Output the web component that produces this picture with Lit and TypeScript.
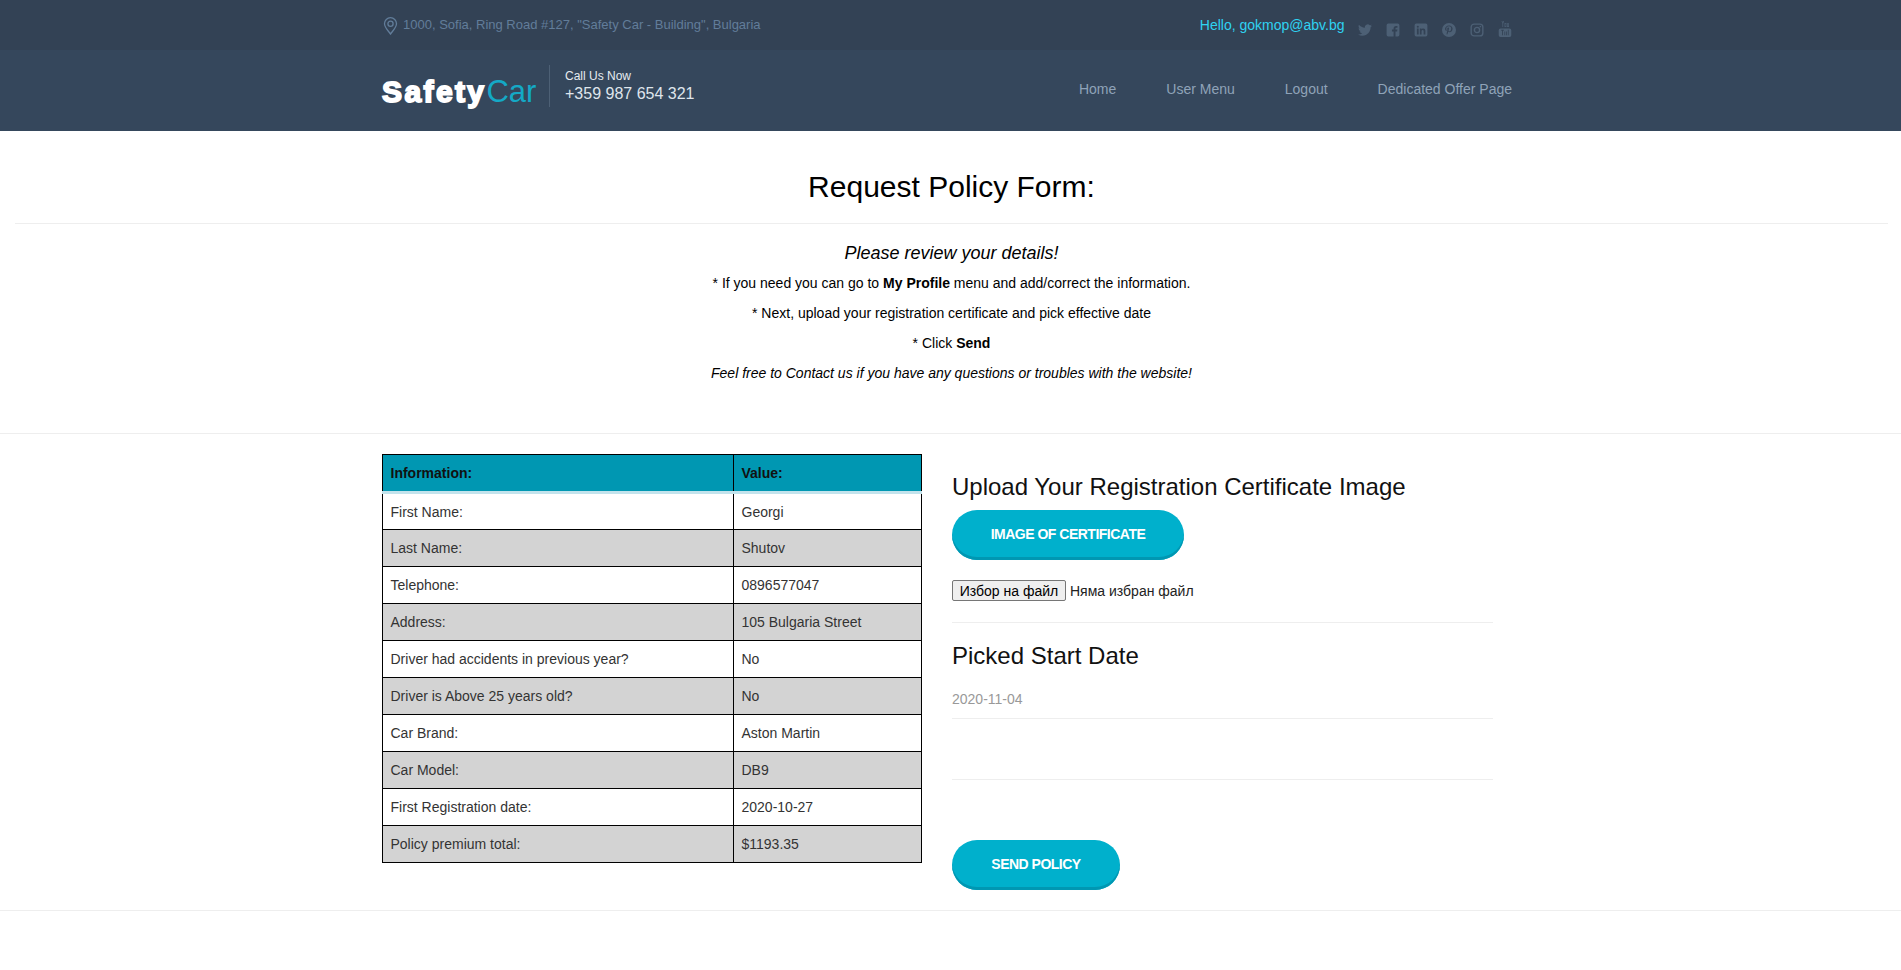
import { LitElement, html, css, svg } from 'lit';
import { customElement } from 'lit/decorators.js';

const rows: [string, string][] = [
  ['First Name:', 'Georgi'],
  ['Last Name:', 'Shutov'],
  ['Telephone:', '0896577047'],
  ['Address:', '105 Bulgaria Street'],
  ['Driver had accidents in previous year?', 'No'],
  ['Driver is Above 25 years old?', 'No'],
  ['Car Brand:', 'Aston Martin'],
  ['Car Model:', 'DB9'],
  ['First Registration date:', '2020-10-27'],
  ['Policy premium total:', '$1193.35'],
];

const socialIcons = [
  svg`<path d="M23.95 4.57a10 10 0 01-2.82.77 4.96 4.96 0 002.16-2.72c-.95.55-2 .95-3.12 1.18a4.92 4.92 0 00-8.38 4.48C7.69 8.1 4.07 6.13 1.64 3.16a4.82 4.82 0 00-.67 2.48c0 1.71.87 3.21 2.19 4.1a4.9 4.9 0 01-2.23-.62v.06a4.92 4.92 0 003.95 4.83 5 5 0 01-2.21.08 4.94 4.94 0 004.6 3.42A9.87 9.87 0 010 19.54a14 14 0 007.56 2.21c9.05 0 14-7.5 14-13.98 0-.21 0-.42-.02-.63a9.94 9.94 0 002.46-2.55z"/>`,
  svg`<path d="M20 1H4a3 3 0 00-3 3v16a3 3 0 003 3h9v-8.500h-2.800v-3.300H13V9.200c0-2.700 1.600-4.200 4.100-4.200 1.200 0 2.200.1 2.500.1v2.900h-1.700c-1.300 0-1.600.6-1.600 1.500v1.700h3.200l-.4 3.300h-2.800V23H20a3 3 0 003-3V4a3 3 0 00-3-3z"/>`,
  svg`<path fill-rule="evenodd" d="M20 1H4a3 3 0 00-3 3v16a3 3 0 003 3h16a3 3 0 003-3V4a3 3 0 00-3-3zM8 19.500H5V9.500h3zM6.500 8.200a1.750 1.750 0 110-3.500 1.750 1.750 0 010 3.500zM19.500 19.500h-3v-4.900c0-1.200 0-2.700-1.600-2.700s-1.900 1.300-1.900 2.600v5h-3V9.500h2.900v1.400c.4-.8 1.400-1.600 2.900-1.600 3.100 0 3.700 2 3.700 4.700z"/>`,
  svg`<path fill-rule="evenodd" d="M12 0a12 12 0 100 24 12 12 0 000-24zm1 15.800c-1 0-1.900-.5-2.200-1.100l-.7 2.500c-.2.900-.8 1.900-1.200 2.500-.4-.2-.7-.3-1-.5 0-.7 0-1.500.2-2.200l1.200-5.300s-.3-.6-.3-1.500c0-1.400.8-2.400 1.800-2.400.9 0 1.300.6 1.300 1.400 0 .9-.5 2.100-.8 3.300-.2 1 .5 1.800 1.500 1.800 1.800 0 3-2.300 3-5 0-2.100-1.400-3.600-3.900-3.600-2.900 0-4.600 2.100-4.600 4.500 0 .8.200 1.400.6 1.900.2.200.2.300.1.500l-.2.800c-.1.300-.3.300-.5.200-1.300-.5-2-2-2-3.600 0-2.700 2.300-5.900 6.800-5.900 3.600 0 6 2.600 6 5.400 0 3.700-2.100 6.400-5.100 6.400z"/>`,
  svg`<rect x="2" y="2" width="20" height="20" rx="5" fill="none" stroke="currentColor" stroke-width="2.400"/><circle cx="12" cy="12" r="4.500" fill="none" stroke="currentColor" stroke-width="2.400"/><circle cx="17.800" cy="6.200" r="1.400"/>`,
  svg`<path fill-rule="evenodd" d="M4 13h16a3 3 0 013 3v9a3 3 0 01-3 3H4a3 3 0 01-3-3v-9a3 3 0 013-3zm1.500 2.500v1.500h1.400v8h1.500v-8h1.400v-1.500zm5.500 3v6.500h1.300v-6.500zm3 0v6.500h1.300v-6.500zm3-3v9.500h1.300v-9.500z"/><path d="M6 0h1.400l.8 3L9 0h1.400L8.800 5v5.500H7.500V5zM11.200 3.500h3.200v7h-3.200zm1.100 1.200v4.600h1V4.700zM15.600 3.500h1.200v5.800h1V3.500H19v7h-3.400z"/>`,
];

@customElement('app-root')
export class AppRoot extends LitElement {
  static styles = css`
    :host {
      display: block;
      font-family: 'Liberation Sans', Arial, sans-serif;
      font-size: 14px;
      color: #000;
      background: #fff;
      min-height: 970px;
    }
    .top-bar {
      background: #334255;
      height: 50px;
    }
    .header {
      background: #35475c;
      height: 81px;
    }
    .container {
      width: 1130px;
      margin-left: 382px;
      display: flex;
      align-items: center;
      justify-content: space-between;
      height: 100%;
    }
    .address {
      display: flex;
      align-items: center;
      gap: 6px;
      font-size: 13px;
      color: #627d9a;
      margin-top: -1px;
      padding-left: 1px;
    }
    .address svg {
      width: 15px;
      height: 18px;
      margin: 2px -1px 0 0;
    }
    .top-right {
      display: flex;
      align-items: center;
    }
    .hello {
      color: #2fd2f2;
      font-size: 14px;
    }
    .social {
      display: flex;
      gap: 14px;
      align-items: flex-end;
      margin-left: 13.5px;
      margin-top: 8px;
      color: #4d6075;
    }
    .social svg {
      width: 14px;
      height: 14px;
      fill: currentColor;
      display: block;
    }
    .social svg:last-child {
      height: 16px;
    }
    .brand {
      display: flex;
      align-items: center;
    }
    .logo {
      font-size: 30px;
      line-height: 40px;
      width: 167px;
      white-space: nowrap;
      margin-top: 2px;
    }
    .logo b {
      color: #fff;
      -webkit-text-stroke: 1.8px #fff;
      letter-spacing: 2.4px;
    }
    .logo span {
      color: #14a9c6;
      font-size: 31px;
    }
    .call {
      border-left: 1px solid #4d6075;
      padding-left: 15px;
      height: 42px;
      margin-bottom: 10px;
      display: flex;
      flex-direction: column;
      justify-content: center;
    }
    .call small {
      font-size: 12px;
      line-height: 16px;
      color: #e6ebf0;
    }
    .call div {
      font-size: 16px;
      line-height: 20px;
      color: #dfe5ec;
    }
    nav {
      display: flex;
      gap: 50px;
      color: #8fa3b8;
      margin-bottom: 3px;
    }
    .title {
      margin: 0 13px 0 15px;
      padding: 38px 0 19px;
      font-size: 30px;
      line-height: 35px;
      font-weight: 400;
      text-align: center;
      border-bottom: 1px solid #eee;
    }
    .intro {
      text-align: center;
      height: 210px;
      border-bottom: 1px solid #eee;
      padding: 19px 0 0 2px;
      box-sizing: border-box;
    }
    .intro h4 {
      margin: 0;
      font-size: 18px;
      line-height: 20px;
      font-weight: 400;
      font-style: italic;
    }
    .intro p {
      margin: 10px 0;
      line-height: 20px;
    }
    .form {
      display: flex;
      align-items: flex-start;
      padding: 20px 0 0 382px;
      height: 477px;
      box-sizing: border-box;
      border-bottom: 1px solid #eee;
    }
    table {
      width: 540px;
      border-collapse: collapse;
      table-layout: fixed;
      color: #333;
      flex: none;
    }
    td,
    th {
      border: 1px solid #000;
      height: 37px;
      padding: 0 7.5px;
      box-sizing: border-box;
      text-align: left;
      font-size: 14px;
    }
    th {
      height: 38px;
      background: #0097b2;
      color: #111;
      border-bottom: 3px solid #c3e3ec;
    }
    tr:nth-child(even) td {
      background: #d3d3d3;
    }
    .col-a {
      width: 351px;
    }
    .side {
      width: 541px;
      margin-left: 30px;
      display: flex;
      flex-direction: column;
      align-items: flex-start;
    }
    .side h3 {
      margin: 0;
      font-size: 24px;
      line-height: 30px;
      font-weight: 400;
      color: #111;
    }
    .side .upload-title {
      margin-top: 18px;
    }
    .pill {
      height: 50px;
      border: 0;
      border-radius: 25px;
      background: #00b0cc;
      box-shadow: inset 0 -3px 0 #0097b2;
      color: #fff;
      font: 700 14px 'Liberation Sans', Arial, sans-serif;
      letter-spacing: -0.5px;
      text-transform: uppercase;
      padding: 0 0 2px;
    }
    .pill.cert {
      width: 232px;
      margin-top: 8px;
    }
    .pill.send {
      width: 168px;
      margin-top: 60px;
    }
    .file {
      display: flex;
      align-items: center;
      gap: 4px;
      margin-top: 20px;
      font-size: 14px;
      color: #222;
    }
    .file button {
      width: 114px;
      height: 21px;
      padding: 0;
      font: 14px 'Liberation Sans', Arial, sans-serif;
      color: #000;
      background: #efefef;
      border: 1px solid #767676;
      border-radius: 2px;
    }
    .rule {
      width: 100%;
      height: 1px;
      background: #eee;
    }
    .rule.first {
      margin-top: 21px;
    }
    .side .picked {
      margin-top: 18px;
    }
    .date {
      margin-top: 18px;
      line-height: 20px;
      color: #999;
    }
    .rule.second {
      margin-top: 9px;
    }
    .rule.third {
      margin-top: 60px;
    }
  `;

  render() {
    return html`
      <div class="top-bar">
        <div class="container">
          <div class="address">
            <svg viewBox="0 0 15 18" fill="none" stroke="#627d9a" stroke-width="1.300">
              <path d="M7.500 17C4.500 13 1.500 10 1.500 6.700a6 6 0 0112 0C13.500 10 10.500 13 7.500 17z" />
              <circle cx="7.500" cy="6.700" r="2.600" />
            </svg>
            1000, Sofia, Ring Road #127, "Safety Car - Building", Bulgaria
          </div>
          <div class="top-right">
            <span class="hello">Hello, gokmop@abv.bg</span>
            <div class="social">
              ${socialIcons.map((icon, i) =>
                i === 5
                  ? html`<svg viewBox="0 0 24 28">${icon}</svg>`
                  : html`<svg viewBox="0 0 24 24">${icon}</svg>`
              )}
            </div>
          </div>
        </div>
      </div>
      <header class="header">
        <div class="container">
          <div class="brand">
            <div class="logo"><b>Safety</b><span>Car</span></div>
            <div class="call">
              <small>Call Us Now</small>
              <div>+359 987 654 321</div>
            </div>
          </div>
          <nav>
            <span>Home</span>
            <span>User Menu</span>
            <span>Logout</span>
            <span>Dedicated Offer Page</span>
          </nav>
        </div>
      </header>
      <h2 class="title">Request Policy Form:</h2>
      <div class="intro">
        <h4>Please review your details!</h4>
        <p>* If you need you can go to <b>My Profile</b> menu and add/correct the information.</p>
        <p>* Next, upload your registration certificate and pick effective date</p>
        <p>* Click <b>Send</b></p>
        <p><i>Feel free to Contact us if you have any questions or troubles with the website!</i></p>
      </div>
      <section class="form">
        <table>
          <thead>
            <tr>
              <th class="col-a">Information:</th>
              <th>Value:</th>
            </tr>
          </thead>
          <tbody>
            ${rows.map(
              ([label, value]) => html`<tr>
                <td>${label}</td>
                <td>${value}</td>
              </tr>`
            )}
          </tbody>
        </table>
        <div class="side">
          <h3 class="upload-title">Upload Your Registration Certificate Image</h3>
          <button class="pill cert">Image of certificate</button>
          <div class="file">
            <button>Избор на файл</button>
            <span>Няма избран файл</span>
          </div>
          <div class="rule first"></div>
          <h3 class="picked">Picked Start Date</h3>
          <div class="date">2020-11-04</div>
          <div class="rule second"></div>
          <div class="rule third"></div>
          <button class="pill send">Send policy</button>
        </div>
      </section>
    `;
  }
}
